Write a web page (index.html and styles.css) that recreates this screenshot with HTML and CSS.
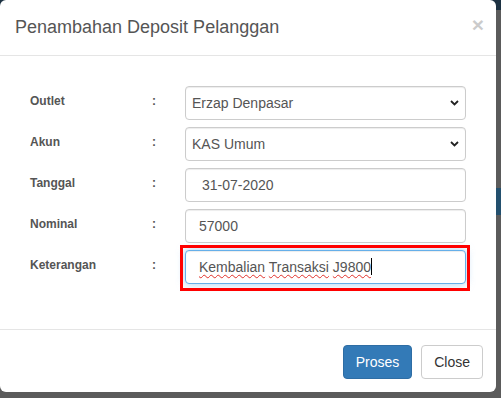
FILE: index.html
```html
<!DOCTYPE html>
<html lang="id">
<head>
<meta charset="utf-8">
<title>Penambahan Deposit Pelanggan</title>
<link rel="stylesheet" href="styles.css">
</head>
<body>
<div class="modal">
  <div class="modal-header">
    <h4 class="modal-title">Penambahan Deposit Pelanggan</h4>
    <span class="close">&times;</span>
  </div>
  <div class="modal-body">
    <div class="row">
      <label class="lbl">Outlet</label>
      <span class="colon">:</span>
      <div class="select-wrap">
        <select class="control select"><option>Erzap Denpasar</option></select>
        <svg class="chev" width="9" height="6" viewBox="0 0 9 6"><path d="M1 1 L4.5 4.5 L8 1" fill="none" stroke="#222" stroke-width="1.8"/></svg>
      </div>
    </div>
    <div class="row">
      <label class="lbl">Akun</label>
      <span class="colon">:</span>
      <div class="select-wrap">
        <select class="control select"><option>KAS Umum</option></select>
        <svg class="chev" width="9" height="6" viewBox="0 0 9 6"><path d="M1 1 L4.5 4.5 L8 1" fill="none" stroke="#222" stroke-width="1.8"/></svg>
      </div>
    </div>
    <div class="row">
      <label class="lbl">Tanggal</label>
      <span class="colon">:</span>
      <input class="control input date" type="text" value="31-07-2020">
    </div>
    <div class="row">
      <label class="lbl">Nominal</label>
      <span class="colon">:</span>
      <input class="control input" type="text" value="57000">
    </div>
    <div class="row">
      <label class="lbl">Keterangan</label>
      <span class="colon">:</span>
      <div class="focus-wrap">
        <div class="control input focused"><span class="spell">Kembalian</span> <span class="spell">Transaksi</span> <span class="spell">J9800</span><span class="caret"></span></div>
        <div class="highlight"></div>
      </div>
    </div>
  </div>
  <div class="modal-footer">
    <button class="btn btn-primary">Proses</button>
    <button class="btn btn-default">Close</button>
  </div>
</div>
</body>
</html>
```

FILE: styles.css
```css
* { box-sizing: border-box; }
html, body { margin: 0; padding: 0; }
body {
  width: 501px;
  height: 398px;
  overflow: hidden;
  font-family: "Liberation Sans", Arial, sans-serif;
  background: linear-gradient(to bottom, #1c3142 0, #1c3142 10px, #5b5b5b 10px, #5b5b5b 188px, #23506e 188px, #23506e 215px, #5b5b5b 215px);
}
.modal {
  width: 496px;
  background: #fff;
  border-radius: 6px;
  overflow: hidden;
}
.modal-header {
  display: flex;
  justify-content: space-between;
  align-items: center;
  padding: 15px 15px 15px 15px;
  border-bottom: 1px solid #e5e5e5;
}
.modal-title {
  margin: 0;
  font-size: 18px;
  line-height: 25px;
  font-weight: normal;
  color: #555;
}
.close {
  font-size: 21px;
  font-weight: bold;
  line-height: 1;
  color: #000;
  opacity: .2;
  margin-right: -3px;
  margin-top: -6px;
}
.modal-body {
  padding: 30px 30px 45px 30px;
  display: flex;
  flex-direction: column;
  gap: 7px;
}
.row {
  display: grid;
  grid-template-columns: 122px 33px 281px;
  align-items: start;
}
.lbl, .colon {
  font-size: 12px;
  font-weight: bold;
  color: #555;
  line-height: 17px;
  padding-top: 7px;
}
.control {
  display: block;
  width: 281px;
  height: 34px;
  margin: 0;
  border: 1px solid #ccc;
  border-radius: 4px;
  background: #fff;
  color: #555;
  font-family: "Liberation Sans", Arial, sans-serif;
  font-size: 14px;
  line-height: 20px;
  box-shadow: inset 0 1px 1px rgba(0,0,0,.075);
  outline: none;
}
.select-wrap { position: relative; }
.select {
  appearance: none;
  -webkit-appearance: none;
  padding: 6px 24px 6px 6px;
}
.chev {
  position: absolute;
  right: 7px;
  top: 14px;
  pointer-events: none;
}
.input { padding: 6px 12px 6px 13px; }
.date { padding-left: 16px; }
.focus-wrap { position: relative; }
.focused {
  border-color: #66afe9;
  box-shadow: inset 0 1px 1px rgba(0,0,0,.075), 0 0 8px rgba(102,175,233,.6);
  white-space: nowrap;
}
.spell {
  text-decoration: underline wavy #e0302a;
  text-decoration-thickness: 1px;
  text-underline-offset: 2px;
}
.caret {
  display: inline-block;
  width: 1px;
  height: 17px;
  background: #000;
  vertical-align: -3px;
}
.highlight {
  position: absolute;
  left: -5px;
  top: -5px;
  right: -4px;
  bottom: -7px;
  border: 3px solid #f00;
  pointer-events: none;
}
.modal-footer {
  display: flex;
  justify-content: flex-end;
  gap: 9px;
  padding: 15px 13px 13px 15px;
  border-top: 1px solid #e5e5e5;
}
.btn {
  font-family: "Liberation Sans", Arial, sans-serif;
  font-size: 14px;
  line-height: 20px;
  padding: 6px 12px;
  border: 1px solid transparent;
  border-radius: 4px;
  margin: 0;
}
.btn-primary {
  background: #337ab7;
  border-color: #2e6da4;
  color: #fff;
}
.btn-default {
  background: #fff;
  border-color: #ccc;
  color: #333;
}
```
